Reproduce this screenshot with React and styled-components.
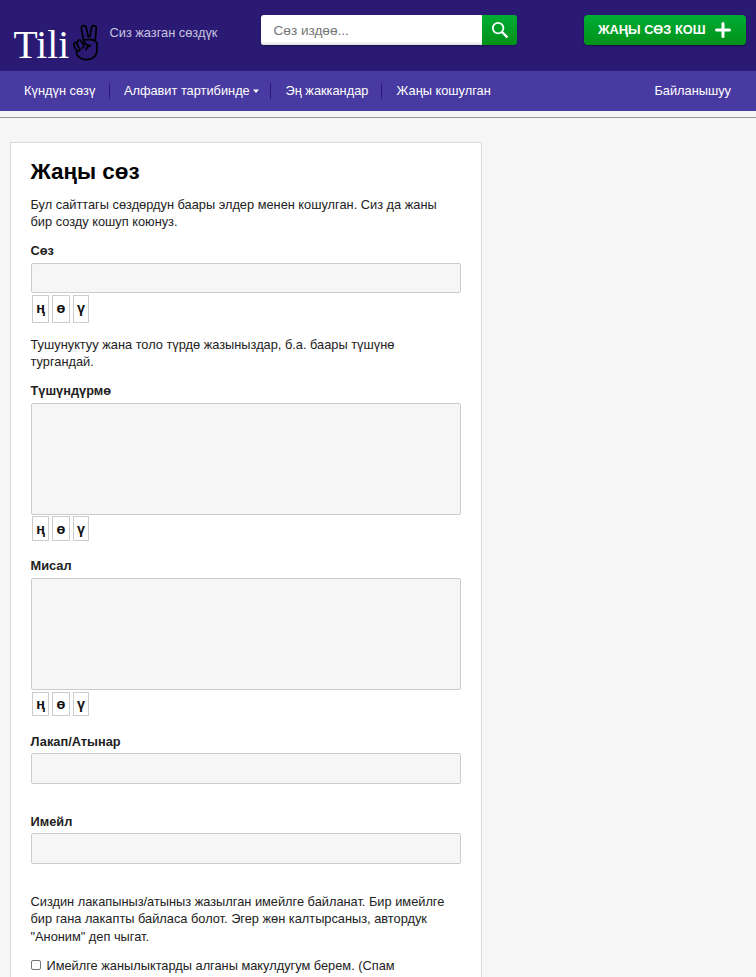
import React from "react";
import styled, { createGlobalStyle } from "styled-components";

const Global = createGlobalStyle`
  *, *::before, *::after { box-sizing: border-box; }
  html { overflow: hidden; }
  body {
    margin: 0;
    height: 977px;
    overflow: hidden;
    background: #f6f6f6;
    color: #222;
    font: 12.8px/17.28px "Liberation Sans", Arial, sans-serif;
  }
  input, textarea, button { font-family: inherit; }
`;

const Page = styled.div`
  height: 977px;
  overflow: hidden;
`;
const Header = styled.header`
  height: 71px;
  padding: 15px 10px 0 13.5px;
  display: flex;
  align-items: flex-start;
  background: #2a1a73;
`;
const Brand = styled.a`
  display: flex;
  width: 96px;
  padding-top: 9px;
  color: #fff;
`;
const BrandName = styled.span`
  width: 59.5px;
  font: 39.5px/42px "Liberation Serif", serif;
`;
const Hand = styled.svg`
  width: 26px;
  height: 37px;
`;
const Tagline = styled.span`
  width: 151.5px;
  padding-top: 9px;
  color: #c8c4e0;
`;
const Search = styled.form`
  display: flex;
  width: 256px;
  height: 30px;
  border-radius: 3px;
  box-shadow: 0 1px 2px rgba(0, 0, 0, 0.3);
`;
const SearchInput = styled.input`
  width: 221px;
  border: 0;
  padding: 0 12.5px;
  border-radius: 3px 0 0 3px;
  background: #fff;
  box-shadow: inset 0 -3px 2px -1px #e4e4e4;
  font-size: 13.6px;
  &::placeholder { color: #757575; }
`;
const SearchButton = styled.button`
  width: 35px;
  padding: 0;
  border: 0;
  border-radius: 0 3px 3px 0;
  background: linear-gradient(#00ad34, #029119);
  svg { display: block; margin: 0 0 0 8px; }
`;
const AddWord = styled.a`
  display: flex;
  align-items: center;
  justify-content: space-between;
  width: 162px;
  height: 30px;
  margin-left: auto;
  padding: 0 15px 0 14px;
  border-radius: 4px;
  background: linear-gradient(#00ad34, #029119);
  box-shadow: 0 1px 2px rgba(0, 0, 0, 0.45);
  color: #fff;
  font-weight: bold;
  white-space: nowrap;
`;
const Nav = styled.nav`
  display: flex;
  align-items: center;
  height: 40px;
  padding: 0 25px 0 10px;
  background: #483aa0;
  color: #fff;
`;
const NavItem = styled.a`
  display: flex;
  align-items: center;
  height: 16px;
  padding: 0 ${(p) => p.$right ?? 13.1}px 0 14.1px;
  border-right: ${(p) => (p.$last ? "0" : "1px solid #2a1a73")};
  margin-left: ${(p) => (p.$push ? "auto" : "0")};
  white-space: nowrap;
`;
const Caret = styled.svg`
  width: 6px;
  height: 4px;
  margin-left: 3px;
  fill: #fff;
`;
const Rule = styled.hr`
  height: 1px;
  margin: 6px 0 24px;
  border: 0;
  background: #999;
`;
const Card = styled.main`
  width: 472px;
  height: 900px;
  margin-left: 10px;
  padding: 15px 20px 0 19.5px;
  border: 1px solid #d9d9d9;
  background: #fff;
`;
const Title = styled.h1`
  margin: 0 0 11px;
  color: #000;
  font-size: 22.4px;
  line-height: 27px;
`;
const Text = styled.p`
  margin: 0 0 ${(p) => p.$gap ?? 11.44}px;
`;
const Field = styled.section`
  height: ${(p) => p.$height}px;
`;
const Label = styled.label`
  display: block;
  height: ${(p) => p.$height ?? 21}px;
  font-weight: bold;
`;
const fieldBox = `
  display: block;
  width: 430px;
  margin: 0 0 0 0.5px;
  border: 1px solid #ccc;
  border-radius: 2px;
  background: #f6f6f6;
  resize: none;
`;
const Input = styled.input`
  ${fieldBox}
  height: ${(p) => p.$height ?? 31}px;
`;
const Area = styled.textarea`
  ${fieldBox}
  height: 112px;
`;
const Keys = styled.div`
  display: flex;
  gap: 3px;
  padding: ${(p) => p.$top}px 0 0 1.5px;
`;
const Key = styled.button`
  width: ${(p) => p.$width}px;
  height: ${(p) => p.$height}px;
  padding: 0 0 ${(p) => (p.$height > 26 ? 2 : 0)}px;
  border: 1px solid #ccc;
  background: #fff;
  color: #111;
  font-size: 14.4px;
  font-weight: bold;
`;
const Agreement = styled.label`
  display: flex;
  align-items: flex-start;
  white-space: nowrap;
`;
const Check = styled.input`
  width: 10px;
  height: 10px;
  margin: 3px 6px 0 0;
  appearance: none;
  border: 1px solid #767676;
  border-radius: 2px;
  background: #fff;
`;

function Peace() {
  return (
    <Hand viewBox="219 72 78 111" fill="none" stroke="#000" strokeWidth="5" strokeLinecap="round" strokeLinejoin="round">
      <path d="M250 117L244 86Q243 77 251 77Q258 77 259 84L265 111M270 111L274 84Q275 77 283 77Q290 78 289 85L286 119" />
      <path d="M251 120Q258 119 265 119Q284 117 291 129V148Q291 175 264 179Q242 180 232 166Q229 162 230 154" />
      <path d="M236 143L231 130Q225 123 222 131Q221 136 225 145Q230 155 238 152Q243 149 236 143Z" />
      <path d="M232 127Q233 119 240 120Q244 122 251 136Q253 144 246 144M251 121Q253 135 271 137Q260 140 258 149" />
    </Hand>
  );
}

function Letters({ top, height }) {
  return (
    <Keys $top={top}>
      <Key type="button" $width={17} $height={height}>ң</Key>
      <Key type="button" $width={18} $height={height}>ө</Key>
      <Key type="button" $width={16} $height={height}>ү</Key>
    </Keys>
  );
}

export default function App() {
  return (
    <Page>
      <Global />
      <Header>
        <Brand><BrandName>Tili</BrandName><Peace /></Brand>
        <Tagline>Сиз жазган сөздүк</Tagline>
        <Search>
          <SearchInput placeholder="Сөз издөө..." />
          <SearchButton type="button" aria-label="Издөө">
            <svg width="20" height="20" viewBox="0 0 20 20" fill="none" stroke="#fff" strokeWidth="1.8">
              <circle cx="8.1" cy="8.1" r="5.3" />
              <path d="M12 12L17.4 17.4" strokeWidth="2.4" />
            </svg>
          </SearchButton>
        </Search>
        <AddWord>
          ЖАҢЫ СӨЗ КОШ
          <svg width="16" height="16" viewBox="0 0 16 16" stroke="#fff" strokeWidth="3" strokeLinecap="round">
            <path d="M8 1.5V14.5M1.5 8H14.5" />
          </svg>
        </AddWord>
      </Header>
      <Nav>
        <NavItem $right={13.5}>Күндүн сөзү</NavItem>
        <NavItem $right={11.7}>
          Алфавит тартибинде
          <Caret viewBox="0 0 6 4"><path d="M0 0.5H6L3 3.9Z" /></Caret>
        </NavItem>
        <NavItem>Эң жаккандар</NavItem>
        <NavItem $last>Жаңы кошулган</NavItem>
        <NavItem $last $push $right={0}>Байланышуу</NavItem>
      </Nav>
      <Rule />
      <Card>
        <Title>Жаңы сөз</Title>
        <Text>Бул сайттагы сөздөрдун баары элдер менен кошулган. Сиз да жаны<br />бир созду кошуп коюнуз.</Text>
        <Field $height={94}>
          <Label>Сөз</Label>
          <Input $height={30} />
          <Letters top={2} height={28} />
        </Field>
        <Text>Тушунуктуу жана толо түрдө жазыныздар, б.а. баары түшүнө<br />тургандай.</Text>
        <Field $height={175}>
          <Label>Түшүндүрмө</Label>
          <Area />
          <Letters top={1} height={25} />
        </Field>
        <Field $height={176}>
          <Label>Мисал</Label>
          <Area />
          <Letters top={2} height={24} />
        </Field>
        <Field $height={80}>
          <Label $height={20}>Лакап/Атынар</Label>
          <Input />
        </Field>
        <Field $height={80}>
          <Label $height={20}>Имейл</Label>
          <Input />
        </Field>
        <Text $gap={12.2}>Сиздин лакапыныз/атыныз жазылган имейлге байланат. Бир имейлге<br />бир гана лакапты байласа болот. Эгер жөн калтырсаныз, автордук<br />"Аноним" деп чыгат.</Text>
        <Agreement><Check type="checkbox" />Имейлге жанылыктарды алганы макулдугум берем. (Спам</Agreement>
      </Card>
    </Page>
  );
}
